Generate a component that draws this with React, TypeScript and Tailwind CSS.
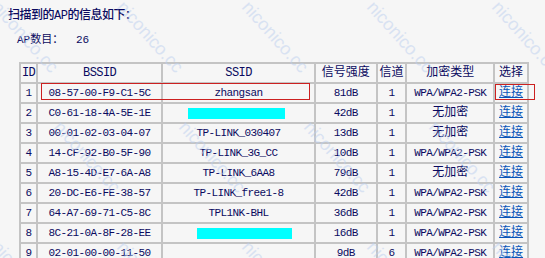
import React from 'react';

const rows = [
  { id: 1, bssid: '08-57-00-F9-C1-5C', ssid: 'zhangsan', signal: '81dB', ch: '1', enc: 'WPA/WPA2-PSK' },
  { id: 2, bssid: 'C0-61-18-4A-5E-1E', ssid: '#hide1', signal: '42dB', ch: '1', enc: '无加密' },
  { id: 3, bssid: '00-01-02-03-04-07', ssid: 'TP-LINK_030407', signal: '13dB', ch: '1', enc: '无加密' },
  { id: 4, bssid: '14-CF-92-B0-5F-90', ssid: 'TP-LINK_3G_CC', signal: '10dB', ch: '1', enc: 'WPA/WPA2-PSK' },
  { id: 5, bssid: 'A8-15-4D-E7-6A-A8', ssid: 'TP-LINK_6AA8', signal: '79dB', ch: '1', enc: '无加密' },
  { id: 6, bssid: '20-DC-E6-FE-38-57', ssid: 'TP-LINK_free1-8', signal: '42dB', ch: '1', enc: 'WPA/WPA2-PSK' },
  { id: 7, bssid: '64-A7-69-71-C5-8C', ssid: 'TPL1NK-BHL', signal: '36dB', ch: '1', enc: 'WPA/WPA2-PSK' },
  { id: 8, bssid: '8C-21-0A-8F-28-EE', ssid: '#hide2', signal: '16dB', ch: '1', enc: 'WPA/WPA2-PSK' },
  { id: 9, bssid: '02-01-00-00-11-50', ssid: '', signal: '9dB', ch: '6', enc: 'WPA/WPA2-PSK' },
];

// watermark tiles
const marks: { x: number; y: number }[] = [];
for (let j = 0; j < 3; j++) {
  for (let i = -1; i < 5; i++) {
    marks.push({ x: i * 125 + (j % 2) * 62 + 130, y: j * 120 - 5 });
  }
}

function Ssid({ v }: { v: string }) {
  if (v === '#hide1') return <span className="inline-block align-middle w-[97px] h-[11px] bg-[#00ffff] mr-[4px]" />;
  if (v === '#hide2') return <span className="inline-block align-middle w-[95px] h-[11px] bg-[#00ffff] ml-[12px]" />;
  return <>{v}</>;
}

export default function App() {
  return (
    <div
      className="relative w-[545px] h-[258px] overflow-hidden bg-[#f6f6f6] text-[#0a0a60]"
      style={{ fontFamily: '"Liberation Mono", "Noto Sans CJK SC", monospace' }}
    >
      <div className="pl-[8px] pt-[9px]">
        <div className="text-[12px] leading-[14px] font-medium tracking-[-0.5px]">扫描到的AP的信息如下：</div>
        <div className="flex mt-[10px] ml-[9px] text-[11px] leading-[14px]">
          <span className="w-[59px]">AP数目：</span>
          <span>26</span>
        </div>

        <div className="relative mt-[15px] ml-[11px] w-[510px]">
          <table className="border-collapse border-2 border-[#b9b9b9] text-[11px] leading-[14px] tracking-[-0.6px] text-center">
            <thead>
              <tr className="h-[20px] text-[12px]">
                <th className="w-[17px] border-2 border-[#c4c4c4] font-normal p-0">ID</th>
                <th className="w-[126px] border-2 border-[#c4c4c4] font-normal p-0">BSSID</th>
                <th className="w-[153px] border-2 border-[#c4c4c4] font-normal p-0">SSID</th>
                <th className="w-[62px] border-2 border-[#c4c4c4] font-normal p-0 tracking-normal">信号强度</th>
                <th className="w-[30px] border-2 border-[#c4c4c4] font-normal p-0 tracking-normal">信道</th>
                <th className="w-[88px] border-2 border-[#c4c4c4] font-normal p-0 tracking-normal">加密类型</th>
                <th className="w-[34px] border-2 border-[#c4c4c4] font-normal p-0 tracking-normal">选择</th>
              </tr>
            </thead>
            <tbody>
              {rows.map((r) => (
                <tr key={r.id} className="h-[20px]">
                  <td className="border-2 border-[#c4c4c4] p-0">{r.id}</td>
                  <td className="border-2 border-[#c4c4c4] p-0">{r.bssid}</td>
                  <td className="border-2 border-[#c4c4c4] p-0"><Ssid v={r.ssid} /></td>
                  <td className="border-2 border-[#c4c4c4] p-0">{r.signal}</td>
                  <td className="border-2 border-[#c4c4c4] p-0">{r.ch}</td>
                  <td className={`border-2 border-[#c4c4c4] p-0 ${r.enc === '无加密' ? 'text-[12px] tracking-normal' : ''}`}>{r.enc}</td>
                  <td className="border-2 border-[#c4c4c4] p-0 text-[12px] tracking-normal">
                    <a className="text-[#0a55b8] underline">连接</a>
                  </td>
                </tr>
              ))}
            </tbody>
          </table>

          {/* red highlight boxes */}
          <div className="absolute left-[22px] top-[21px] w-[269px] h-[17px] border border-[#cc2020] pointer-events-none" />
          <div className="absolute left-[476px] top-[22px] w-[40px] h-[16px] border border-[#cc2020] pointer-events-none" />
        </div>
      </div>

      {/* watermark */}
      {marks.map((m, k) => (
        <div
          key={k}
          className="absolute text-[18px] text-[#bccff0] opacity-50 whitespace-nowrap pointer-events-none origin-top-left rotate-[48deg]"
          style={{ left: m.x, top: m.y, fontFamily: '"Liberation Sans", sans-serif' }}
        >
          niconico.cc
        </div>
      ))}
    </div>
  );
}
